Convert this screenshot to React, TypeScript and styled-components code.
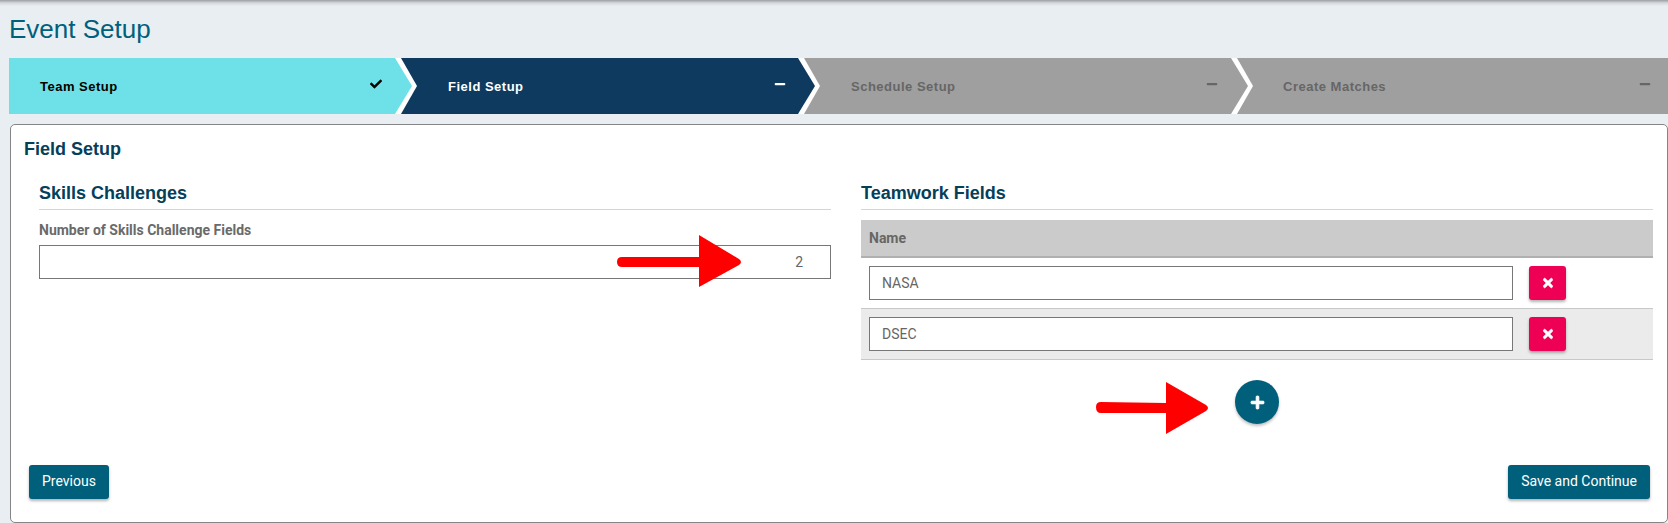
import React from "react";
import { FaCheck, FaMinus, FaPlus, FaTimes } from "react-icons/fa";
import styled, { createGlobalStyle } from "styled-components";

const GlobalStyle = createGlobalStyle`
  html, body {
    margin: 0;
    padding: 0;
    background: #e9eef3;
    overflow: hidden;
  }
  * {
    box-sizing: border-box;
  }
`;

const Page = styled.div`
  position: relative;
  width: 1668px;
  height: 523px;
  padding-left: 9px;
  font-family: Roboto, "Liberation Sans", sans-serif;
  background: linear-gradient(#9b9ea5 0, #d5d9de 3px, #e9eef3 6px);
`;

const PageTitle = styled.h1`
  margin: 0;
  height: 58px;
  padding: 14px 0 0 0;
  font-family: "Liberation Sans", Arial, sans-serif;
  font-size: 26px;
  line-height: 30px;
  font-weight: 400;
  color: #00607c;
`;

const Stepper = styled.div`
  display: flex;
  height: 56px;
`;

const tones = {
  done: { bg: "#6de0e8", fg: "#000000", icon: "#000000" },
  active: { bg: "#0d3a5e", fg: "#ffffff", icon: "#ffffff" },
  todo: { bg: "#9f9f9f", fg: "#666666", icon: "#666666" },
};

type Tone = keyof typeof tones;

const Step = styled.div<{ $tone: Tone; $width: number; $index: number; $left: number; $right: number }>`
  position: relative;
  z-index: ${(p) => 4 - p.$index};
  flex: 0 0 ${(p) => p.$width}px;
  display: flex;
  align-items: center;
  justify-content: space-between;
  padding: 0 ${(p) => p.$right}px 0 ${(p) => p.$left}px;
  background: ${(p) => tones[p.$tone].bg};
  color: ${(p) => tones[p.$tone].fg};

  svg {
    width: 12px;
    height: 12px;
    margin-top: -4px;
    color: ${(p) => tones[p.$tone].icon};
  }

  ${(p) =>
    p.$index < 3
      ? `
  &::before {
    content: "";
    position: absolute;
    top: 0;
    left: 100%;
    width: 22px;
    height: 100%;
    background: #ffffff;
    clip-path: polygon(0 0, 6px 0, 100% 50%, 6px 100%, 0 100%);
  }
  &::after {
    content: "";
    position: absolute;
    top: 0;
    left: 100%;
    width: 17px;
    height: 100%;
    background: ${tones[p.$tone].bg};
    clip-path: polygon(0 0, 100% 50%, 0 100%);
  }`
      : ""}
`;

const StepLabel = styled.span`
  font-family: "Liberation Sans", Arial, sans-serif;
  font-size: 13px;
  font-weight: 700;
  letter-spacing: 0.5px;
`;

const Panel = styled.div`
  width: 1658px;
  height: 399px;
  margin: 10px 0 0 1px;
  border: 1px solid #858585;
  border-radius: 5px;
  background: #ffffff;
  display: flex;
  flex-direction: column;
`;

const PanelTitle = styled.h2`
  margin: 0;
  height: 44px;
  padding: 14px 0 0 13px;
  font-family: "Liberation Sans", Arial, sans-serif;
  font-size: 18px;
  line-height: 20px;
  font-weight: 700;
  color: #04405a;
`;

const Columns = styled.div`
  display: grid;
  grid-template-columns: 792px 792px;
  column-gap: 30px;
  padding: 0 11px 0 28px;
  flex: 1;
`;

const Section = styled.section`
  display: flex;
  flex-direction: column;
`;

const SectionTitle = styled.h3`
  margin: 0;
  height: 41px;
  padding-top: 13px;
  border-bottom: 1px solid #d5d5d5;
  font-family: "Liberation Sans", Arial, sans-serif;
  font-size: 18px;
  line-height: 22px;
  font-weight: 700;
  color: #04405a;
`;

const FieldLabel = styled.label`
  display: block;
  margin-top: 12px;
  height: 23px;
  font-size: 14px;
  line-height: 17px;
  font-weight: 700;
  color: #6a6a6a;
`;

const TextInput = styled.input<{ $align?: string }>`
  display: block;
  width: 100%;
  height: 34px;
  padding: 0 12px;
  border: 1px solid #777777;
  background: #ffffff;
  font-family: Roboto, "Liberation Sans", sans-serif;
  font-size: 14px;
  color: #666666;
  outline: none;
  text-align: ${(p) => p.$align || "left"};
`;

const CountInput = styled(TextInput)`
  padding-right: 27px;
`;

const TableHead = styled.div`
  display: flex;
  align-items: center;
  height: 38px;
  margin-top: 10px;
  padding-left: 8px;
  background: #cbcbcb;
  border-bottom: 2px solid #b0b0b0;
  font-size: 14px;
  font-weight: 700;
  color: #666666;
`;

const TableRow = styled.div<{ $striped?: boolean }>`
  display: flex;
  align-items: center;
  gap: 16px;
  height: 51px;
  padding: 0 87px 0 8px;
  background: ${(p) => (p.$striped ? "#ebebeb" : "#ffffff")};
  border-bottom: 1px solid #c8c8c8;
`;

const DeleteButton = styled.button`
  flex: 0 0 37px;
  height: 34px;
  padding: 0;
  border: 0;
  border-radius: 3px;
  background: #ee0055;
  color: #ffffff;
  display: flex;
  align-items: center;
  justify-content: center;
  box-shadow: 0 2px 3px rgba(0, 0, 0, 0.3);

  svg {
    width: 10px;
    height: 14px;
    stroke: #ffffff;
    stroke-width: 24px;
  }
`;

const AddRow = styled.div`
  display: flex;
  justify-content: center;
  padding-top: 20px;
`;

const AddButton = styled.button`
  width: 44px;
  height: 44px;
  padding: 0;
  border: 0;
  border-radius: 50%;
  background: #00607c;
  color: #ffffff;
  display: flex;
  align-items: center;
  justify-content: center;
  box-shadow: 0 2px 3px rgba(0, 0, 0, 0.25);

  svg {
    width: 15px;
    height: 15px;
    stroke: #ffffff;
    stroke-width: 24px;
  }
`;

const Footer = styled.div`
  display: flex;
  justify-content: space-between;
  padding: 0 17px 23px 18px;
`;

const ActionButton = styled.button`
  height: 34px;
  padding: 0 13px 2px;
  border: 0;
  border-radius: 3px;
  background: #00607c;
  color: #ffffff;
  font-family: Roboto, "Liberation Sans", sans-serif;
  font-size: 14px;
  box-shadow: 0 2px 3px rgba(0, 0, 0, 0.3);
`;

// the red annotation arrows sit on top of the page
const Arrow = styled.svg`
  position: absolute;
  top: 0;
  left: 0;
  width: 1668px;
  height: 523px;
  z-index: 10;
  pointer-events: none;
`;

const steps: { label: string; tone: Tone; width: number; left: number; right: number; done?: boolean }[] = [
  { label: "Team Setup", tone: "done", width: 386, left: 31, right: 13, done: true },
  { label: "Field Setup", tone: "active", width: 403, left: 53, right: 12 },
  { label: "Schedule Setup", tone: "todo", width: 433, left: 53, right: 13 },
  { label: "Create Matches", tone: "todo", width: 437, left: 52, right: 17 },
];

const fields = ["NASA", "DSEC"];

export default function App() {
  return (
    <Page>
      <GlobalStyle />
      <PageTitle>Event Setup</PageTitle>
      <Stepper>
        {steps.map((step, i) => (
          <Step key={step.label} $tone={step.tone} $width={step.width} $index={i} $left={step.left} $right={step.right}>
            <StepLabel>{step.label}</StepLabel>
            {step.done ? <FaCheck /> : <FaMinus />}
          </Step>
        ))}
      </Stepper>
      <Panel>
        <PanelTitle>Field Setup</PanelTitle>
        <Columns>
          <Section>
            <SectionTitle>Skills Challenges</SectionTitle>
            <FieldLabel>Number of Skills Challenge Fields</FieldLabel>
            <CountInput $align="right" defaultValue="2" />
          </Section>
          <Section>
            <SectionTitle>Teamwork Fields</SectionTitle>
            <TableHead>Name</TableHead>
            {fields.map((name, i) => (
              <TableRow key={name} $striped={i % 2 === 1}>
                <TextInput defaultValue={name} />
                <DeleteButton>
                  <FaTimes />
                </DeleteButton>
              </TableRow>
            ))}
            <AddRow>
              <AddButton>
                <FaPlus />
              </AddButton>
            </AddRow>
          </Section>
        </Columns>
        <Footer>
          <ActionButton>Previous</ActionButton>
          <ActionButton>Save and Continue</ActionButton>
        </Footer>
      </Panel>
      <Arrow viewBox="0 0 1668 523">
        <path d="M622 257 L699 257 L699 235 L739 259 Q743 262 739 265 L699 287 L699 267 L622 267 Q617 267 617 262 Q617 257 622 257 Z" fill="#ff0000" />
        <path d="M1101 402 L1166 403 L1166 382 L1206 405 Q1210 408 1206 411 L1166 434 L1166 413 L1101 413 Q1096 413 1096 407 Q1096 402 1101 402 Z" fill="#ff0000" />
      </Arrow>
    </Page>
  );
}
